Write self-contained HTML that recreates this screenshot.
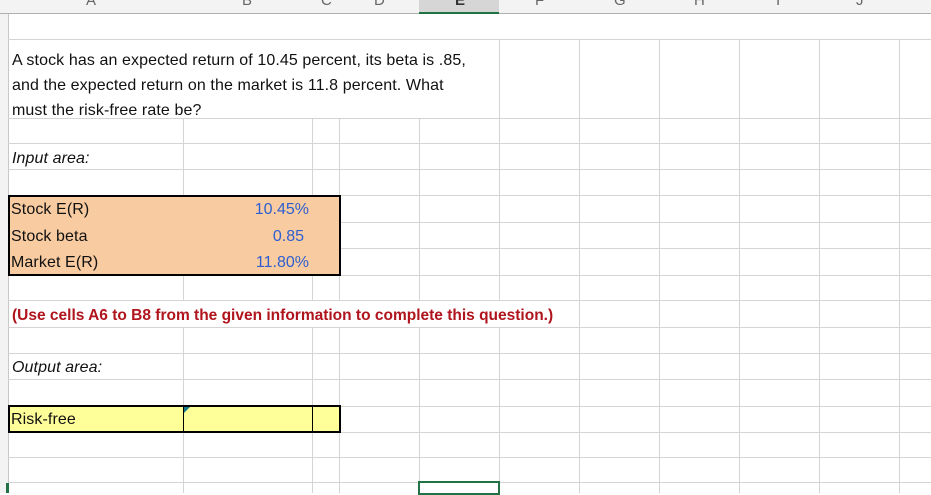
<!DOCTYPE html>
<html><head><meta charset="utf-8"><style>
body{margin:0;width:931px;height:493px;overflow:hidden;background:#fff;position:relative;font-family:"Liberation Sans",sans-serif}
.a{position:absolute}
.t{position:absolute;font-size:16px;color:#111;white-space:nowrap;letter-spacing:0.1px}
.n{position:absolute;font-size:16px;color:#2e5fd0;white-space:nowrap;text-align:right}
</style></head><body>
<div class="a" style="left:0;top:0;width:931px;height:14px;background:#f3f3f3;border-bottom:1px solid #b0b0b0;box-sizing:border-box"></div>
<div class="a" style="left:419px;top:0;width:80px;height:14px;background:#d6d6d6;border-bottom:2px solid #217346;box-sizing:border-box"></div>
<div class="a" style="left:0;top:14px;width:8px;height:479px;background:#f3f3f3;border-right:1px solid #c8c8c8"></div>
<div id="g"></div>
<div class="a" style="left:86px;top:-8px;font-size:15px;color:#666">A</div>
<div class="a" style="left:242px;top:-8px;font-size:15px;color:#666">B</div>
<div class="a" style="left:321px;top:-8px;font-size:15px;color:#666">C</div>
<div class="a" style="left:374px;top:-8px;font-size:15px;color:#666">D</div>
<div class="a" style="left:455px;top:-8px;font-size:15px;color:#333;font-weight:bold">E</div>
<div class="a" style="left:535px;top:-8px;font-size:15px;color:#666">F</div>
<div class="a" style="left:614px;top:-8px;font-size:15px;color:#666">G</div>
<div class="a" style="left:694px;top:-8px;font-size:15px;color:#666">H</div>
<div class="a" style="left:776px;top:-8px;font-size:15px;color:#666">I</div>
<div class="a" style="left:856px;top:-8px;font-size:15px;color:#666">J</div>
<div class="t" style="left:12px;top:48px;line-height:25px">A stock has an expected return of 10.45 percent, its beta is .85,<br>and the expected return on the market is 11.8 percent. What<br>must the risk-free rate be?</div>
<div class="t" style="left:12px;top:150px;font-style:italic">Input area:</div>
<div class="a" style="left:8px;top:195px;width:333px;height:81px;background:#f8cba0;border:2px solid #000;box-sizing:border-box"></div>
<div class="t" style="left:11px;top:201px">Stock E(R)</div>
<div class="t" style="left:11px;top:228px">Stock beta</div>
<div class="t" style="left:11px;top:254px">Market E(R)</div>
<div class="n" style="right:622px;top:201px">10.45%</div>
<div class="n" style="right:627px;top:228px">0.85</div>
<div class="n" style="right:622px;top:254px">11.80%</div>
<div class="t" style="left:12px;top:307px;color:#b0141c;font-weight:bold;font-size:15.5px;letter-spacing:0px">(Use cells A6 to B8 from the given information to complete this question.)</div>
<div class="t" style="left:12px;top:359px;font-style:italic">Output area:</div>
<div class="a" style="left:8px;top:405px;width:333px;height:28px;background:#ffff99;border:2px solid #000;box-sizing:border-box"></div>
<div class="a" style="left:183px;top:405px;width:1px;height:28px;background:#000"></div>
<div class="a" style="left:312px;top:405px;width:1px;height:28px;background:#000"></div>
<div class="a" style="left:184px;top:407px;width:0;height:0;border-top:6px solid #1a7a8a;border-right:6px solid transparent"></div>
<div class="t" style="left:11px;top:411px">Risk-free</div>
<div class="a" style="left:418px;top:481px;width:82px;height:14px;border:2px solid #217346;box-sizing:border-box"></div>
<div class="a" style="left:6px;top:483px;width:3px;height:10px;background:#217346"></div>
<script>
var g=document.getElementById('g'),h='';
function L(x,y,w,hh){h+='<div class="a" style="left:'+x+'px;top:'+y+'px;width:'+w+'px;height:'+hh+'px;background:#d4d4d4"></div>';}
var rows=[39,118,143,169,195,222,248,275,300,327,353,379,406,432,457,482];
rows.forEach(function(y){L(8,y,923,1)});
var cols=[183,312,339,419,499,579,659,739,819,899];
for(var i=0;i<rows.length;i++){
 var y0=rows[i],y1=(i+1<rows.length?rows[i+1]:493);
 cols.forEach(function(x){
  if(y0==39 && x<499) return;
  if(y0==300 && x<579) return;
  L(x,y0,1,y1-y0);
 });
}
g.innerHTML=h;
</script>
</body></html>
